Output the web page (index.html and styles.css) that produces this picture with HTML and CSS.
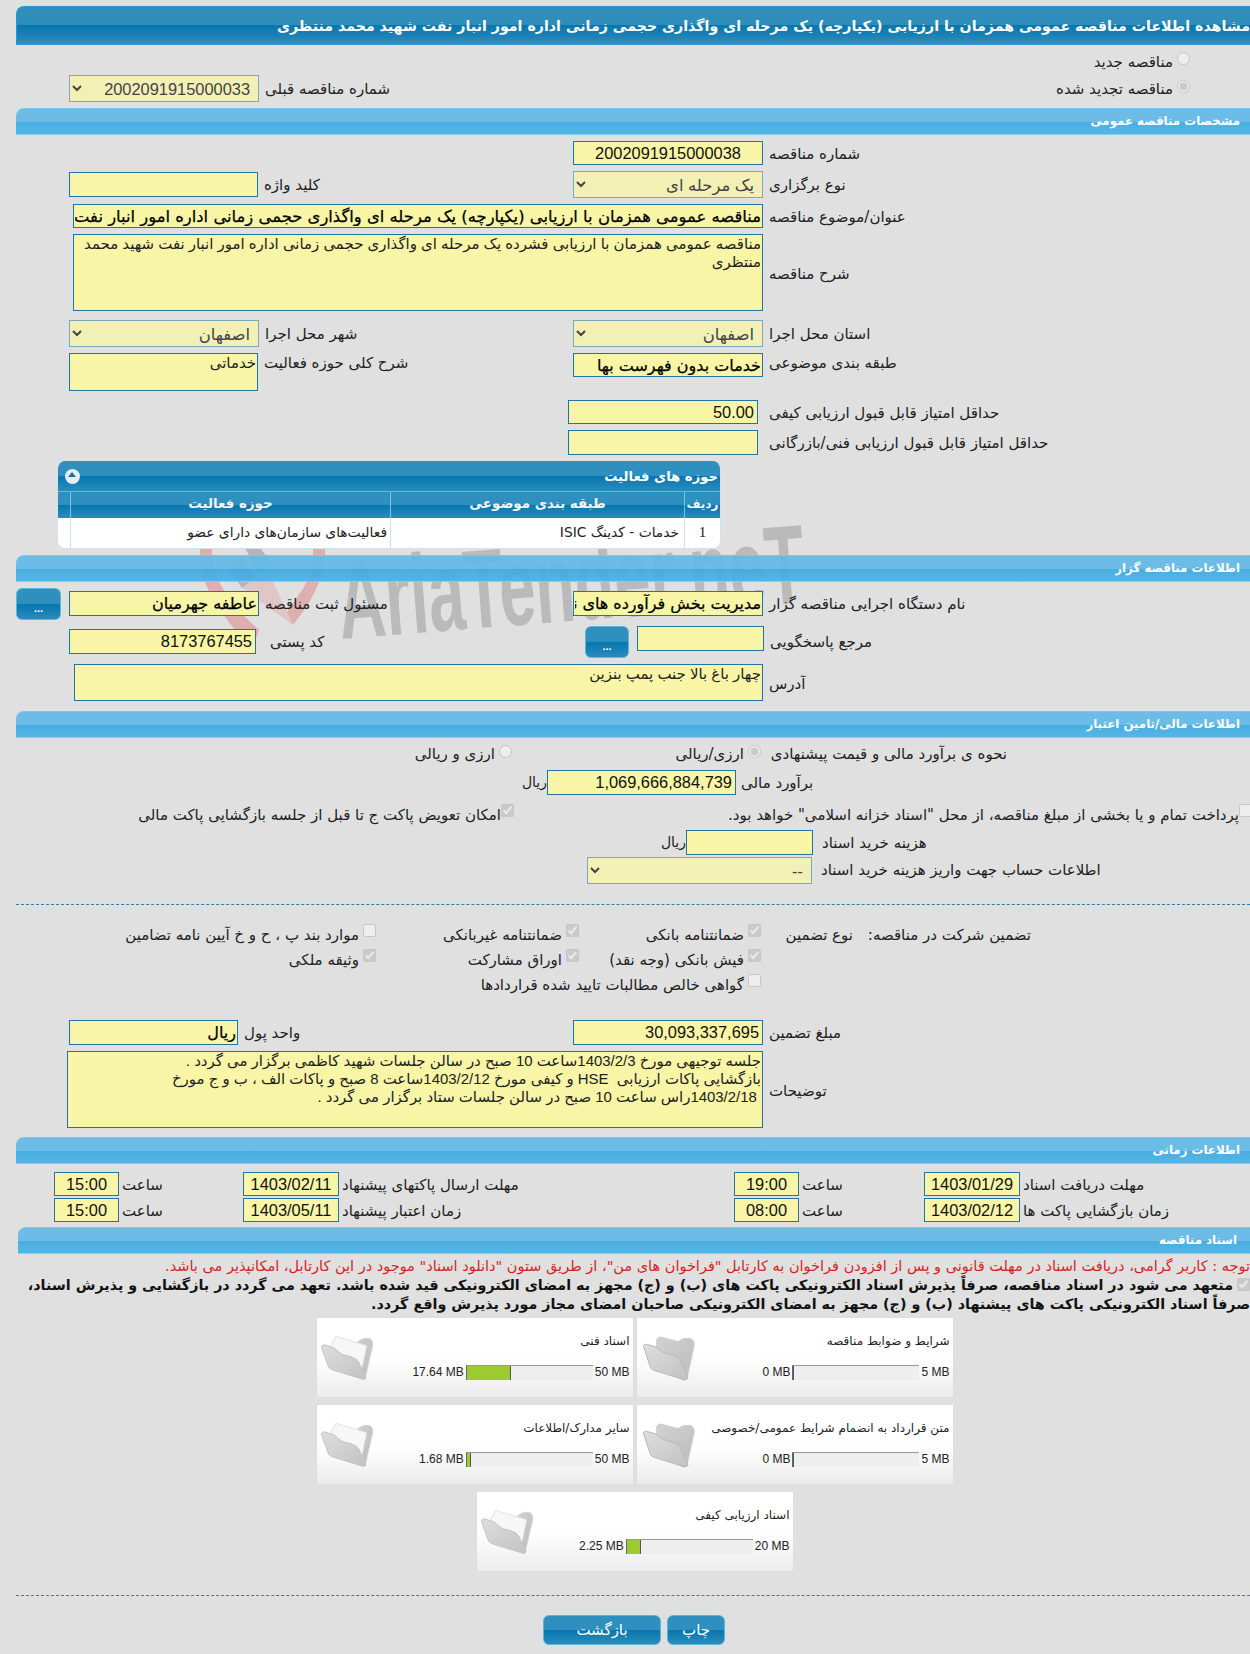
FILE: index.html
```html
<!DOCTYPE html>
<html lang="fa">
<head>
<meta charset="utf-8">
<title>مشاهده اطلاعات مناقصه</title>
<link rel="stylesheet" href="styles.css">
</head>
<body>
<div class="page">
  <div class="watermark" aria-hidden="true">
    <svg class="wm-shield" viewBox="0 0 140 160" width="140" height="160">
      <path class="wm-red" d="M3 20 C40 18 80 10 100 2 C110 8 120 12 128 14 L128 60 C124 85 112 105 96 125 L90 112 C102 95 114 80 116 60 L116 24 C110 22 104 20 100 16 C80 26 40 30 15 32 L15 60 C18 85 40 110 62 130 L56 147 C30 125 6 90 3 62 Z"/>
      <path class="wm-red2" d="M45 88 L58 77 L75 80 L90 112 L96 125 Z"/>
      <path class="wm-gray" d="M30 67 L43 57 L58 77 L45 88 Z M48 48 L61 45 L76 65 L63 75 Z"/>
    </svg>
    <span class="wm-text">AriaTender.neT</span>
  </div>

  <div class="content">
    <h1 class="head-bar">مشاهده اطلاعات مناقصه عمومی همزمان با ارزیابی (یکپارچه) یک مرحله ای واگذاری حجمی زمانی اداره امور انبار نفت شهید محمد منتظری</h1>

    <div class="grid-row radio-top">
      <label class="radio-line full-r"><input type="radio" disabled><span>مناقصه جدید</span></label>
    </div>
    <div class="grid-row radio-bottom">
      <div class="lc field"><select class="sel w190" disabled><option>2002091915000033</option></select><span class="lbl lbl-sel">شماره مناقصه قبلی</span></div>
      <label class="radio-line full-r radio-low"><input type="radio" checked disabled><span>مناقصه تجدید شده</span></label>
    </div>

    <h2 class="sec-bar mt0">مشخصات مناقصه عمومی</h2>

    <div class="grid-row mt6"><div class="rc field"><input class="inp w190 num center" value="2002091915000038" readonly><span class="lbl">شماره مناقصه</span></div></div>
    <div class="grid-row mt6">
      <div class="lc field mt1"><input class="inp w189 h25" readonly><span class="lbl">کلید واژه</span></div>
      <div class="rc field"><select class="sel w190" disabled><option>یک مرحله ای</option></select><span class="lbl lbl-sel">نوع برگزاری</span></div>
    </div>
    <div class="grid-row mt6"><div class="full field"><input class="inp w690 ml4 strong strong-title" value="مناقصه عمومی همزمان با ارزیابی (یکپارچه) یک مرحله ای واگذاری حجمی زمانی اداره امور انبار نفت شهید محمد منتظری" readonly><span class="lbl">عنوان/موضوع مناقصه</span></div></div>
    <div class="grid-row mt6"><div class="full field center-y"><textarea class="inp area w690 ml4 h77" readonly>مناقصه عمومی همزمان با ارزیابی فشرده یک مرحله ای واگذاری حجمی زمانی اداره امور انبار نفت شهید محمد منتظری</textarea><span class="lbl">شرح مناقصه</span></div></div>
    <div class="grid-row mt9">
      <div class="lc field"><select class="sel w190" disabled><option>اصفهان</option></select><span class="lbl lbl-sel">شهر محل اجرا</span></div>
      <div class="rc field"><select class="sel w190" disabled><option>اصفهان</option></select><span class="lbl lbl-sel">استان محل اجرا</span></div>
    </div>
    <div class="grid-row mt6">
      <div class="lc field"><textarea class="inp area w189 h38" readonly>خدماتی</textarea><span class="lbl lbl-up">شرح کلی حوزه فعالیت</span></div>
      <div class="rc field"><input class="inp w190 strong" value="خدمات بدون فهرست بها" readonly><span class="lbl lbl-up">طبقه بندی موضوعی</span></div>
    </div>
    <div class="grid-row mt9"><div class="rc field shift"><input class="inp w190 num" value="50.00" readonly><span class="lbl lbl-far">حداقل امتیاز قابل قبول ارزیابی کیفی</span></div></div>
    <div class="grid-row mt6"><div class="rc field shift"><input class="inp w190 h25" readonly><span class="lbl lbl-far">حداقل امتیاز قابل قبول ارزیابی فنی/بازرگانی</span></div></div>

    <section class="panel">
      <div class="panel-title"><span>حوزه های فعالیت</span><i class="collapse"></i></div>
      <div class="panel-cols panel-head">
        <div class="pc-gap"></div>
        <div class="pc-a">حوزه فعالیت</div>
        <div class="pc-b">طبقه بندی موضوعی</div>
        <div class="pc-c">ردیف</div>
      </div>
      <div class="panel-cols panel-row">
        <div class="pc-gap"></div>
        <div class="pc-a">فعالیت‌های سازمان‌های دارای عضو</div>
        <div class="pc-b">خدمات - کدینگ ISIC</div>
        <div class="pc-c">1</div>
      </div>
    </section>

    <h2 class="sec-bar mt6">اطلاعات مناقصه گزار</h2>

    <div class="grid-row mt6">
      <button class="dots dots-edge" type="button">...</button>
      <div class="lc field mt3"><input class="inp w190 h25 strong" value="عاطفه جهرمیان" readonly><span class="lbl">مسئول ثبت مناقصه</span></div>
      <div class="rc field mt3"><input class="inp w190 h25 strong" value="مدیریت بخش فرآورده های نفتی اصفهان" readonly><span class="lbl">نام دستگاه اجرایی مناقصه گزار</span></div>
    </div>
    <div class="grid-row mt6">
      <div class="lc field mt3"><input class="inp w187 h25 num" value="8173767455" readonly><span class="lbl lbl-wide">کد پستی</span></div>
      <div class="rc field"><button class="dots dots-mid" type="button">...</button><input class="inp w127 h25" readonly><span class="lbl lbl-low">مرجع پاسخگویی</span></div>
    </div>
    <div class="grid-row mt6"><div class="full field center-y"><textarea class="inp area w689 ml5 h37" readonly>چهار باغ بالا جنب پمپ بنزین</textarea><span class="lbl">آدرس</span></div></div>

    <h2 class="sec-bar mt10">اطلاعات مالی/تامین اعتبار</h2>

    <div class="estimate mt5">
      <span class="est-label">نحوه ی برآورد مالی و قیمت پیشنهادی</span>
      <label class="est-opt"><input type="radio" checked disabled><span>ارزی/ریالی</span></label>
      <label class="est-opt"><input type="radio" disabled><span>ارزی و ریالی</span></label>
    </div>
    <div class="amount mt5">
      <span class="unit">ریال</span><input class="inp w189 h25 num" value="1,069,666,884,739" readonly><span class="lbl">برآورد مالی</span>
    </div>
    <div class="checks mt9">
      <label class="check-a"><input type="checkbox" disabled><span>پرداخت تمام و یا بخشی از مبلغ مناقصه، از محل "اسناد خزانه اسلامی" خواهد بود.</span></label>
      <label class="check-b"><input type="checkbox" checked disabled><span>امکان تعویض پاکت ج تا قبل از جلسه بازگشایی پاکت مالی</span></label>
    </div>
    <div class="buy mt4">
      <span class="unit">ریال</span><input class="inp w127 h25" readonly><span class="lbl lbl-buy">هزینه خرید اسناد</span>
    </div>
    <div class="account mt2">
      <select class="sel w225" disabled><option>--</option></select><span class="lbl lbl-buy">اطلاعات حساب جهت واریز هزینه خرید اسناد</span>
    </div>

    <hr class="dash dash-mid">

    <div class="guarantee">
      <span class="g-title">تضمین شرکت در مناقصه:</span>
      <span class="g-type">نوع تضمین</span>
      <label class="g-item"><input type="checkbox" checked disabled><span>ضمانتنامه بانکی</span></label>
      <label class="g-item"><input type="checkbox" checked disabled><span>ضمانتنامه غیربانکی</span></label>
      <label class="g-item"><input type="checkbox" disabled><span>موارد بند پ ، ح و خ آیین نامه تضامین</span></label>

      <span></span><span></span>
      <label class="g-item"><input type="checkbox" checked disabled><span>فیش بانکی (وجه نقد)</span></label>
      <label class="g-item"><input type="checkbox" checked disabled><span>اوراق مشارکت</span></label>
      <label class="g-item"><input type="checkbox" checked disabled><span>وثیقه ملکی</span></label>

      <span></span><span></span>
      <label class="g-item g-wide"><input type="checkbox" disabled><span>گواهی خالص مطالبات تایید شده قراردادها</span></label>
    </div>

    <div class="grid-row mt32">
      <div class="lc field"><input class="inp w169 h25 strong" value="ریال" readonly><span class="lbl">واحد پول</span></div>
      <div class="rc field"><input class="inp w190 h25 num" value="30,093,337,695" readonly><span class="lbl">مبلغ تضمین</span></div>
    </div>
    <div class="grid-row mt6"><div class="full field center-y"><textarea class="inp area w696 neg2 h77" readonly>جلسه توجیهی مورخ 1403/2/3ساعت 10 صبح در سالن جلسات شهید کاظمی برگزار می گردد .
بازگشایی پاکات ارزیابی  HSE و کیفی مورخ 1403/2/12ساعت 8 صبح و پاکات الف ، ب و ج مورخ
 1403/2/18راس ساعت 10 صبح در سالن جلسات ستاد برگزار می گردد .</textarea><span class="lbl">توضیحات</span></div></div>

    <h2 class="sec-bar mt9">اطلاعات زمانی</h2>

    <div class="time-row mt8">
      <div class="field"><input class="inp w65 h24 num center" value="15:00" readonly><span class="lbl lbl-t">ساعت</span></div>
      <div class="field"><input class="inp w96 h24 num center" value="1403/02/11" readonly><span class="lbl lbl-t">مهلت ارسال پاکتهای پیشنهاد</span></div>
      <div class="field"><input class="inp w65 h24 num center" value="19:00" readonly><span class="lbl lbl-t">ساعت</span></div>
      <div class="field"><input class="inp w96 h24 num center" value="1403/01/29" readonly><span class="lbl lbl-t">مهلت دریافت اسناد</span></div>
    </div>
    <div class="time-row mt2">
      <div class="field"><input class="inp w65 h24 num center" value="15:00" readonly><span class="lbl lbl-t">ساعت</span></div>
      <div class="field"><input class="inp w96 h24 num center" value="1403/05/11" readonly><span class="lbl lbl-t">زمان اعتبار پیشنهاد</span></div>
      <div class="field"><input class="inp w65 h24 num center" value="08:00" readonly><span class="lbl lbl-t">ساعت</span></div>
      <div class="field"><input class="inp w96 h24 num center" value="1403/02/12" readonly><span class="lbl lbl-t">زمان بازگشایی پاکت ها</span></div>
    </div>

    <h2 class="sec-bar sec-docs">اسناد مناقصه</h2>

    <p class="note">توجه : کاربر گرامی، دریافت اسناد در مهلت قانونی و پس از افزودن فراخوان به کارتابل "فراخوان های من"، از طریق ستون "دانلود اسناد" موجود در این کارتابل، امکانپذیر می باشد.</p>
    <label class="pledge"><input type="checkbox" checked disabled>متعهد می شود در اسناد مناقصه، صرفاً پذیرش اسناد الکترونیکی پاکت های (ب) و (ج) مجهز به امضای الکترونیکی قید شده باشد. تعهد می گردد در بازگشایی و پذیرش اسناد، صرفاً اسناد الکترونیکی پاکت های پیشنهاد (ب) و (ج) مجهز به امضای الکترونیکی صاحبان امضای مجاز مورد پذیرش واقع گردد.</label>

    <div class="cards">
      <article class="card">
        <h3 class="card-title">شرایط و ضوابط مناقصه</h3>
        <div class="meter"><span>5 MB</span><div class="track"><div class="fill" style="width:0%"></div></div><span>0 MB</span></div>
        <svg class="folder" viewBox="10 40 180 180" width="60" height="60"><use href="#folder-empty"/></svg>
      </article>
      <article class="card">
        <h3 class="card-title">اسناد فنی</h3>
        <div class="meter"><span>50 MB</span><div class="track"><div class="fill" style="width:35.3%"></div></div><span>17.64 MB</span></div>
        <svg class="folder" viewBox="10 40 180 180" width="60" height="60"><use href="#folder-full"/></svg>
      </article>
      <article class="card">
        <h3 class="card-title">متن قرارداد به انضمام شرایط عمومی/خصوصی</h3>
        <div class="meter"><span>5 MB</span><div class="track"><div class="fill" style="width:0%"></div></div><span>0 MB</span></div>
        <svg class="folder" viewBox="10 40 180 180" width="60" height="60"><use href="#folder-empty"/></svg>
      </article>
      <article class="card">
        <h3 class="card-title">سایر مدارک/اطلاعات</h3>
        <div class="meter"><span>50 MB</span><div class="track"><div class="fill" style="width:3.4%"></div></div><span>1.68 MB</span></div>
        <svg class="folder" viewBox="10 40 180 180" width="60" height="60"><use href="#folder-full"/></svg>
      </article>
      <article class="card">
        <h3 class="card-title">اسناد ارزیابی کیفی</h3>
        <div class="meter"><span>20 MB</span><div class="track"><div class="fill" style="width:11.3%"></div></div><span>2.25 MB</span></div>
        <svg class="folder" viewBox="10 40 180 180" width="60" height="60"><use href="#folder-full"/></svg>
      </article>
    </div>

    <hr class="dash dash-end">

    <div class="actions">
      <button class="btn btn-back" type="button">بازگشت</button>
      <button class="btn btn-print" type="button">چاپ</button>
    </div>
  </div>
</div>

<svg class="defs" width="0" height="0" aria-hidden="true">
  <defs>
    <linearGradient id="fBack" x1="0" y1="0" x2="1" y2="1"><stop offset="0" stop-color="#d2d2d2"/><stop offset="1" stop-color="#bcbcbc"/></linearGradient>
    <linearGradient id="fFront" x1="0" y1="0" x2="1" y2="1"><stop offset="0" stop-color="#dedede"/><stop offset="1" stop-color="#c2c2c2"/></linearGradient>
    <g id="folder-empty">
      <path fill="url(#fBack)" stroke="#cfcfcf" stroke-width="3" d="M60 66 Q64 56 76 59 L124 72 Q140 58 160 62 Q176 68 172 86 L152 178 Q148 190 136 186 L60 120 Z"/>
      <path fill="url(#fFront)" stroke="#b8b8b8" stroke-width="3" d="M20 84 Q22 78 30 80 L58 88 Q76 108 100 110 L120 116 Q132 124 136 140 L154 180 Q152 188 142 186 L52 158 Q42 155 40 146 Z"/>
    </g>
    <g id="folder-full">
      <path fill="url(#fBack)" stroke="#d6d6d6" stroke-width="3" d="M124 72 Q140 58 158 62 Q170 68 168 84 L146 180 L100 100 Z"/>
      <path fill="#f7f7f7" stroke="#e2e2e2" stroke-width="3" d="M42 84 L58 56 L150 84 L136 150 L70 110 Z"/>
      <path fill="url(#fFront)" stroke="#c4c4c4" stroke-width="3" d="M14 88 Q16 80 26 82 L54 92 Q74 114 100 116 L118 124 Q128 132 132 146 L148 180 Q146 188 136 184 L46 156 Q36 152 34 144 Z"/>
    </g>
  </defs>
</svg>
</body>
</html>
```

FILE: styles.css
```css
* { box-sizing: border-box; }

html, body {
  margin: 0;
  padding: 0;
  background: #e0e0e0;
}

body {
  width: 1250px;
  height: 1654px;
  overflow: hidden;
  font-family: "Liberation Sans", "DejaVu Sans", sans-serif;
  font-size: 15px;
  color: #222;
}

.page {
  position: relative;
  width: 1250px;
  height: 1654px;
  overflow: hidden;
  padding-top: 6px;
}

/* watermark behind the form */
.watermark {
  position: absolute;
  left: 0;
  top: 0;
  z-index: 0;
  width: 100%;
  height: 100%;
}

.wm-shield {
  position: absolute;
  left: 197px;
  top: 500px;
}

.wm-red { fill: rgba(222, 100, 100, 0.4); }
.wm-red2 { fill: rgba(222, 120, 110, 0.25); }
.wm-gray { fill: rgba(110, 120, 140, 0.4); }

.wm-text {
  position: absolute;
  left: 338px;
  top: 536px;
  font: bold 112px/130px "Liberation Sans", sans-serif;
  color: rgba(140, 140, 140, 0.45);
  white-space: nowrap;
  transform-origin: 0 50%;
  transform: rotate(-4.5deg) scaleX(0.58);
}

.content {
  position: relative;
  z-index: 1;
}

/* title bars */
.head-bar {
  height: 39px;
  margin: 0 0 0 16px;
  padding: 0;
  border: 1px solid #2b95d8;
  border-right: 0;
  border-radius: 8px 0 0 0;
  background: linear-gradient(#318fbc 0%, #2f8dbb 48%, #0677b0 50%, #1f82b6 80%, #398fb9 100%);
  color: #fff;
  font: bold 14.2px/38px "DejaVu Sans", sans-serif;
  direction: rtl;
  white-space: nowrap;
  text-align: right;
}

.sec-bar {
  height: 27px;
  margin-left: 16px;
  margin-bottom: 0;
  padding-right: 10px;
  border-bottom: 1px solid #7ed0f2;
  border-top: 1px solid #77c8ee;
  border-radius: 8px 0 0 0;
  background: linear-gradient(rgba(98, 185, 232, 0.92) 0%, rgba(98, 185, 232, 0.92) 50%, rgba(58, 170, 226, 0.92) 52%, rgba(74, 178, 230, 0.92) 100%);
  color: #fff;
  font: bold 11.8px/25px "DejaVu Sans", sans-serif;
  direction: rtl;
  text-align: right;
}

.sec-docs {
  margin-left: 18px;
  margin-top: 5px;
  padding-right: 13px;
}

/* rows */
.grid-row {
  display: grid;
  grid-template-columns: 69px 504px 1fr;
  align-items: start;
}

.lc { grid-column: 2; }
.rc { grid-column: 3; }
.full { grid-column: 2 / 4; }
.full-r { grid-column: 3; justify-self: end; }

.field {
  display: flex;
  align-items: flex-start;
}

.center-y { align-items: center; }
.shift { margin-left: -5px; }

.lbl {
  direction: rtl;
  height: 24px;
  padding-left: 6px;
  line-height: 26px;
  white-space: nowrap;
  font-family: "DejaVu Sans", sans-serif;
  font-size: 15px;
}

.lbl-sel { line-height: 28px; }
.lbl-up { line-height: 20px; }
.lbl-low { line-height: 33px; }
.lbl-far { padding-left: 11px; }
.lbl-wide { padding-left: 14px; }
.lbl-buy { padding-left: 9px; line-height: 26px; }
.lbl-t { padding-left: 3px; }

/* controls */
.inp {
  display: block;
  height: 24px;
  padding: 0 1px;
  border: 1px solid #1f74aa;
  border-radius: 0;
  outline: none;
  background: #f8f6a6;
  color: #111;
  font-family: "DejaVu Sans", sans-serif;
  font-size: 15px;
  direction: rtl;
  text-align: right;
}

.num {
  font-family: "Liberation Sans", sans-serif;
  font-size: 16.4px;
  direction: ltr;
  text-align: right;
  padding: 0 3px 0 0;
}

.center { text-align: center; padding: 0; }

.strong {
  font-size: 16px;
  color: #000;
  -webkit-text-stroke: 0.25px #000;
}

.strong-title { font-size: 16.4px; }

.area {
  resize: none;
  overflow: hidden;
  font-family: "Liberation Sans", "DejaVu Sans", sans-serif;
  font-size: 14.95px;
  line-height: 18px;
  padding: 0 1px;
  color: #222;
  white-space: pre-wrap;
}

.sel {
  display: block;
  height: 27px;
  padding: 0 4px;
  border: 1px solid #7aa9bf;
  border-radius: 0;
  background: #f2f0b4;
  color: #444;
  opacity: 1;
  font-family: "Liberation Sans", "DejaVu Sans", sans-serif;
  font-size: 16.4px;
  direction: rtl;
}

input, textarea, select { margin: 0; }

.mt0 { margin-top: 0; }
.mt1 { margin-top: 1px; }
.mt2 { margin-top: 2px; }
.mt3 { margin-top: 3px; }
.mt4 { margin-top: 4px; }
.mt5 { margin-top: 5px; }
.mt6 { margin-top: 6px; }
.mt8 { margin-top: 8px; }
.mt9 { margin-top: 9px; }
.mt10 { margin-top: 10px; }
.mt32 { margin-top: 32px; }

.ml4 { margin-left: 4px; }
.ml5 { margin-left: 5px; }
.neg2 { margin-left: -2px; }

.w65 { width: 65px; }
.w96 { width: 96px; }
.w127 { width: 127px; }
.w169 { width: 169px; }
.w187 { width: 187px; }
.w189 { width: 189px; }
.w190 { width: 190px; }
.w225 { width: 225px; }
.w689 { width: 689px; }
.w690 { width: 690px; }
.w696 { width: 696px; }

.h24 { height: 24px; }
.h25 { height: 25px; }
.h37 { height: 37px; }
.h38 { height: 38px; }
.h77 { height: 77px; }

input[type="radio"], input[type="checkbox"] {
  flex: none;
  width: 13px;
  height: 13px;
  margin: 0;
}

/* radios at the top */
.radio-line {
  display: flex;
  direction: rtl;
  align-items: flex-start;
  gap: 4px;
  padding-right: 60px;
  font-family: "DejaVu Sans", sans-serif;
  font-size: 15px;
}

.radio-top { height: 30px; padding-top: 7px; }
.radio-top span { margin-top: 1px; }
.radio-bottom { height: 33px; }
.radio-low { padding-top: 5px; }
.radio-low span { margin-top: 0; }

/* activities panel */
.panel {
  width: 664px;
  height: 88px;
  margin: 6px 0 0 57px;
  border-radius: 8px;
  overflow: hidden;
  border: 1px solid #cfe2ee;
  border-top: 0;
  background: #fff;
  direction: ltr;
}

.panel-title {
  display: flex;
  flex-direction: row-reverse;
  justify-content: space-between;
  align-items: center;
  height: 30px;
  padding: 0 2px 0 7px;
  background: linear-gradient(#2f8fbe 0%, #2f8fbe 48%, #0677b0 52%, #2b8cbc 100%);
  color: #fff;
  font: bold 13.2px "DejaVu Sans", sans-serif;
  direction: ltr;
}

.panel-title span { direction: rtl; }

.collapse {
  position: relative;
  display: block;
  width: 15px;
  height: 15px;
  border-radius: 50%;
  background: #e6eef5;
}

.collapse::after {
  content: "";
  position: absolute;
  left: 3px;
  top: 3px;
  border-left: 4.5px solid transparent;
  border-right: 4.5px solid transparent;
  border-bottom: 5px solid #1f6f9f;
}

.panel-cols {
  display: grid;
  grid-template-columns: 13px 320px 294px 1fr;
  direction: ltr;
}

.panel-cols > div {
  direction: rtl;
  border-right: 1px solid #7cc0e6;
  white-space: nowrap;
}

.panel-cols > div:last-child { border-right: 0; }

.panel-head {
  height: 27px;
  border-top: 1px solid #6db4dc;
  background: linear-gradient(#2f8fbe 0%, #2f8fbe 48%, #0677b0 52%, #2b8cbc 100%);
  color: #f4f4f4;
  font: bold 13.4px/24px "DejaVu Sans", sans-serif;
  text-align: center;
}

.panel-head .pc-c { font-size: 12px; }

.panel-row {
  height: 30px;
  font: 13.8px/28px "DejaVu Sans", sans-serif;
  color: #222;
  text-align: right;
}

.panel-row > div { border-right-color: #d5dfe6; padding-right: 3px; }
.panel-row .pc-c { text-align: center; font-family: "Liberation Serif", serif; font-size: 15px; padding-right: 0; }
.panel-row .pc-b { padding-right: 5px; }

/* ellipsis buttons */
.dots {
  display: block;
  height: 32px;
  padding: 8px 0 0;
  border: 1px solid #5fb4dc;
  border-radius: 6px;
  background: linear-gradient(#2f8fbe 0%, #2f8fbe 48%, #0677b0 52%, #2b8cbc 100%);
  color: #fff;
  font: bold 11px "Liberation Sans", sans-serif;
}

.dots-edge { grid-column: 1; width: 45px; margin-left: 16px; }
.dots-mid { width: 44px; margin: 0 8px 0 12px; }

/* finance rows */
.estimate, .checks {
  display: flex;
  direction: rtl;
  font-family: "DejaVu Sans", sans-serif;
  font-size: 15px;
  height: 22px;
  align-items: flex-start;
}

.estimate { padding-right: 243px; }
.est-label { width: 246px; line-height: 22px; white-space: nowrap; }
.est-opt { display: flex; gap: 4px; width: 249px; align-items: flex-start; line-height: 22px; }
.est-opt input { margin-top: 2px; }

.amount, .buy, .account {
  display: flex;
  align-items: flex-start;
}

.amount { padding-left: 515px; }
.buy { padding-left: 658px; }
.account { padding-left: 587px; }

.unit {
  direction: rtl;
  width: 28px;
  padding-top: 4px;
  font: 14px "DejaVu Sans", sans-serif;
}

.amount .unit { width: 32px; }
.amount .lbl { padding-left: 5px; }

.checks label { display: flex; gap: 0; align-items: flex-start; line-height: 22px; white-space: nowrap; }
.check-a { width: 738px; margin-right: -2px; }
.check-b { margin-right: 0; }

/* separator */
.dash {
  height: 0;
  margin: 0 0 0 16px;
  border: 0;
  border-top: 1px dashed #2d7fae;
}

.dash-mid { margin-top: 20px; }
.dash-end { margin-top: 24px; }

/* guarantee */
.guarantee {
  display: grid;
  direction: rtl;
  grid-template-columns: 158px 112px 182px 203px 1fr;
  grid-auto-rows: 25px;
  padding: 19px 219px 0 0;
  font-family: "DejaVu Sans", sans-serif;
  font-size: 15px;
  line-height: 22px;
  height: 83px;
}

.g-type { padding-right: 20px; white-space: nowrap; }
.g-title { white-space: nowrap; }
.g-item { display: flex; gap: 4px; white-space: nowrap; align-items: flex-start; }
.g-wide { grid-column: 3 / 5; }

/* time rows */
.time-row {
  display: grid;
  grid-template-columns: 189px 491px 190px 1fr;
  padding-left: 54px;
}

/* documents */
.note {
  margin: 2px 0 0;
  height: 20px;
  direction: rtl;
  white-space: nowrap;
  color: #d61f1f;
  font: 14.5px/20px "DejaVu Sans", sans-serif;
}

.pledge {
  display: block;
  margin: 0;
  direction: rtl;
  width: 1250px;
  color: #111;
  font: bold 14.3px/19px "DejaVu Sans", sans-serif;
}

.pledge input { margin: 0 0 0 4px; vertical-align: -1px; }

.cards {
  display: flex;
  flex-wrap: wrap;
  direction: rtl;
  justify-content: center;
  gap: 8px 4px;
  width: 637px;
  margin: 4px 0 0 316px;
}

.card {
  position: relative;
  width: 316px;
  height: 79px;
  padding: 15px 3px 0;
  background: linear-gradient(#fff 50%, #ececec 100%);
  box-shadow: 0 0 1px #d6d6d6;
}

.card-title {
  margin: 0;
  height: 32px;
  font: 12px/16px "DejaVu Sans", sans-serif;
  color: #222;
  white-space: nowrap;
}

.meter {
  display: flex;
  align-items: center;
  gap: 2px;
  font: 12px/15px "Liberation Sans", sans-serif;
}

.meter span { direction: ltr; }

.track {
  width: 127px;
  height: 15px;
  direction: ltr;
  background: #eee;
  border-top: 1px solid #999;
  border-left: 1px solid #666;
}

.fill {
  height: 100%;
  min-width: 1px;
  background: #9bcb30;
  border-right: 1px solid #555;
}

.folder {
  position: absolute;
  left: 3px;
  top: 13px;
}

.defs { position: absolute; }

/* buttons */
.actions {
  display: flex;
  gap: 6px;
  margin: 19px 0 0 543px;
}

.btn {
  height: 30px;
  border: 1px solid #5fb4dc;
  border-radius: 6px;
  background: linear-gradient(#2f8fbe 0%, #2f8fbe 48%, #0677b0 52%, #2b8cbc 100%);
  color: #fff;
  font: 15px/26px "DejaVu Sans", sans-serif;
  direction: rtl;
}

.btn-back { width: 118px; }
.btn-print { width: 58px; }
```
